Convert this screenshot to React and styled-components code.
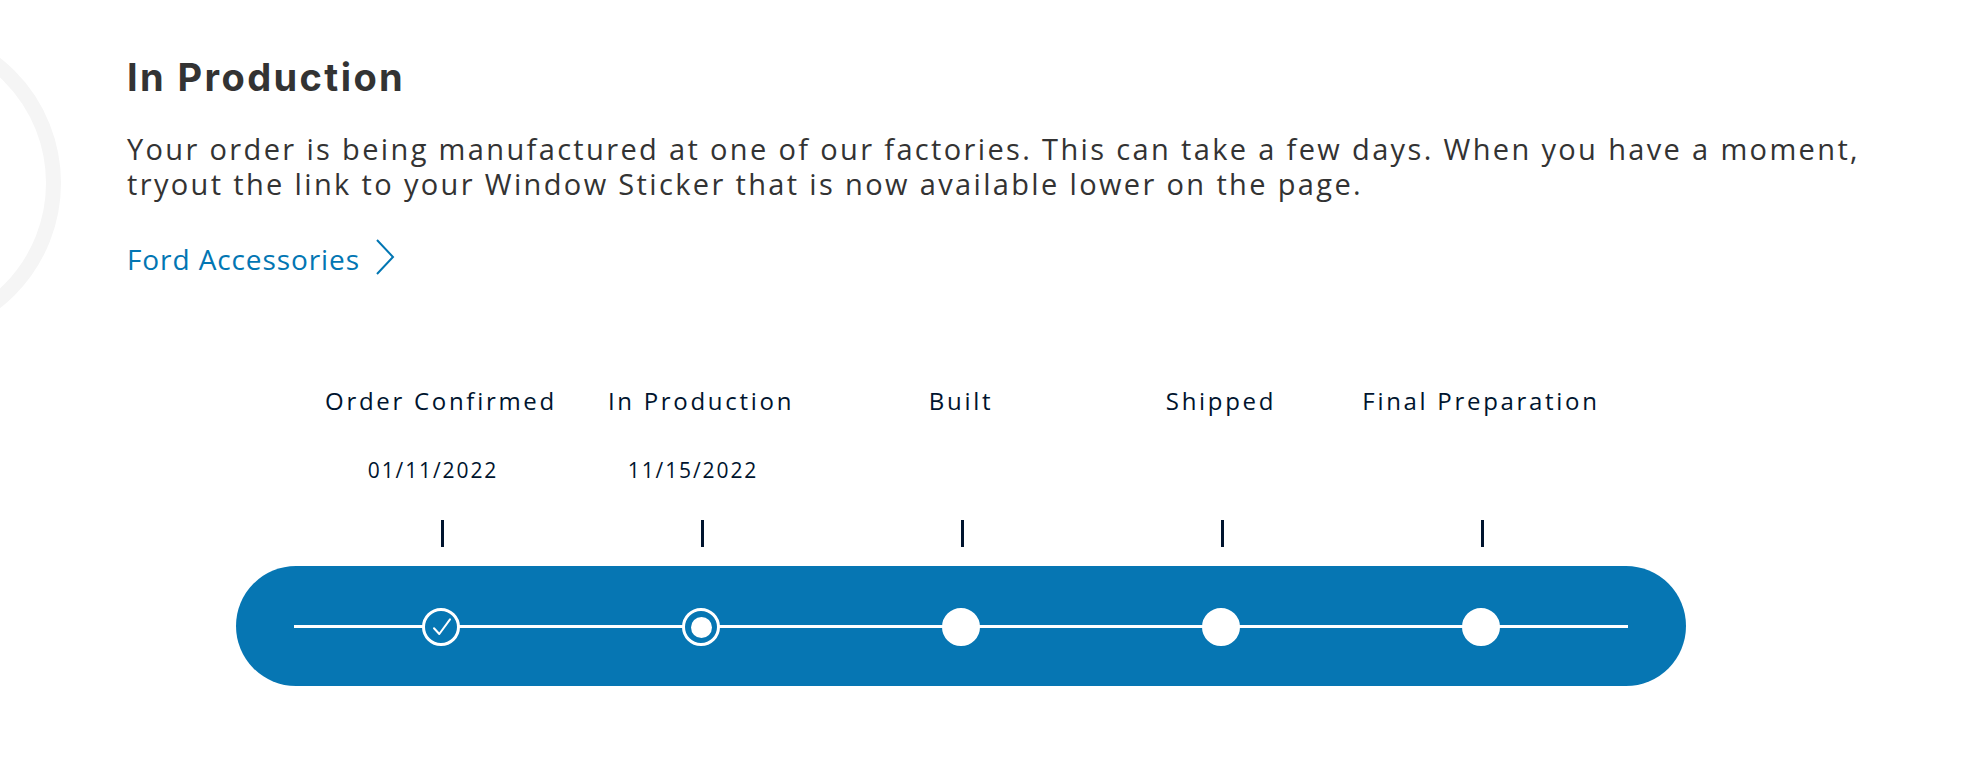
import React from 'react'
import styled, { createGlobalStyle } from 'styled-components'

const GlobalStyle = createGlobalStyle`
  html, body {
    margin: 0;
    padding: 0;
    background: #fff;
  }
  body {
    font-family: 'Open Sans', 'Liberation Sans', sans-serif;
    overflow: hidden;
  }
`

const steps = [
  { label: 'Order Confirmed', date: '01/11/2022', state: 'done' },
  { label: 'In Production', date: '11/15/2022', state: 'current' },
  { label: 'Built', date: '', state: 'pending' },
  { label: 'Shipped', date: '', state: 'pending' },
  { label: 'Final Preparation', date: '', state: 'pending' },
]

const Page = styled.main`
  position: relative;
  width: 1988px;
  height: 784px;
  padding: 54px 0 0 127px;
  box-sizing: border-box;
  overflow: hidden;
`

const Ring = styled.div`
  position: absolute;
  left: -257px;
  top: 24px;
  width: 318px;
  height: 318px;
  box-sizing: border-box;
  border: 15px solid #f5f5f5;
  border-radius: 50%;
`

const Title = styled.h1`
  margin: 0;
  font-family: Inter, 'Open Sans', sans-serif;
  font-size: 38px;
  line-height: 46px;
  font-weight: 700;
  letter-spacing: 2.4px;
  color: #333;
`

const Intro = styled.p`
  margin: 31px 0 0;
  max-width: 1780px;
  font-size: 29px;
  line-height: 35px;
  font-weight: 500;
  color: #333;
  letter-spacing: 2.35px;
`

const Link = styled.a`
  display: inline-flex;
  align-items: center;
  gap: 15px;
  margin-top: 41px;
  font-size: 28px;
  line-height: 34px;
  letter-spacing: 0.9px;
  color: #0276b3;
  text-decoration: none;
  cursor: pointer;

  svg {
    margin-top: -4px;
  }
`

const Timeline = styled.section`
  margin: 110px 0 0 109px;
  width: 1450px;
`

const Columns = styled.div`
  display: grid;
  grid-template-columns: repeat(5, 260px);
  padding: 0 75px;
`

const Step = styled.div`
  display: flex;
  flex-direction: column;
  align-items: center;
  color: #00142e;
`

const Label = styled.div`
  font-size: 24px;
  line-height: 30px;
  font-weight: 500;
  letter-spacing: 2.7px;
  white-space: nowrap;
`

const DateText = styled.div`
  margin-top: 42px;
  padding-right: 16px;
  height: 24px;
  font-size: 21px;
  line-height: 24px;
  font-weight: 500;
  letter-spacing: 1.9px;
`

const Tick = styled.div`
  margin: 38px 0 0 3px;
  width: 3px;
  height: 27px;
  background: #00142e;
`

const Bar = styled.div`
  margin-top: 19px;
  height: 120px;
  border-radius: 60px;
  background: #0676b3;
  display: flex;
  align-items: center;
  padding: 0 58px;
`

const Track = styled.div`
  flex: 1;
  padding: 0 17px;
  border-radius: 2px;
  background: linear-gradient(#fff, #fff) center / 100% 3px no-repeat;
`

const Node = styled.div`
  display: flex;
  justify-content: center;
  padding-top: 2px;
`

const Dot = styled.span`
  display: flex;
  align-items: center;
  justify-content: center;
  width: 38px;
  height: 38px;
  box-sizing: border-box;
  border-radius: 50%;
  border: 3px solid #fff;
  background: ${p => (p.$state === 'pending' ? '#fff' : '#0676b3')};
`

const Core = styled.span`
  width: 21px;
  height: 21px;
  border-radius: 50%;
  background: #fff;
`

const Check = () => (
  <svg width="32" height="32" viewBox="0 0 32 32" fill="none">
    <path d="M9 17.3 L14.3 23 L25 8.3" stroke="#fff" strokeWidth="2" strokeLinecap="round" strokeLinejoin="round" />
  </svg>
)

const Chevron = () => (
  <svg width="20" height="36" viewBox="0 0 20 36" fill="none">
    <path d="M2 1 L18 18 L2 35" stroke="#0276b3" strokeWidth="2" />
  </svg>
)

const App = () => {
  return (
    <Page>
      <GlobalStyle />
      <Ring />
      <Title>In Production</Title>
      <Intro>
        Your order is being manufactured at one of our factories. This can take a few days. When you have a moment,
        tryout the link to your Window Sticker that is now available lower on the page.
      </Intro>
      <Link>
        Ford Accessories
        <Chevron />
      </Link>
      <Timeline>
        <Columns>
          {steps.map(s => (
            <Step key={s.label}>
              <Label>{s.label}</Label>
              <DateText>{s.date}</DateText>
              <Tick />
            </Step>
          ))}
        </Columns>
        <Bar>
          <Track>
            <Columns style={{ padding: 0 }}>
              {steps.map(s => (
                <Node key={s.label}>
                  <Dot $state={s.state}>
                    {s.state === 'done' && <Check />}
                    {s.state === 'current' && <Core />}
                  </Dot>
                </Node>
              ))}
            </Columns>
          </Track>
        </Bar>
      </Timeline>
    </Page>
  )
}

export default App
